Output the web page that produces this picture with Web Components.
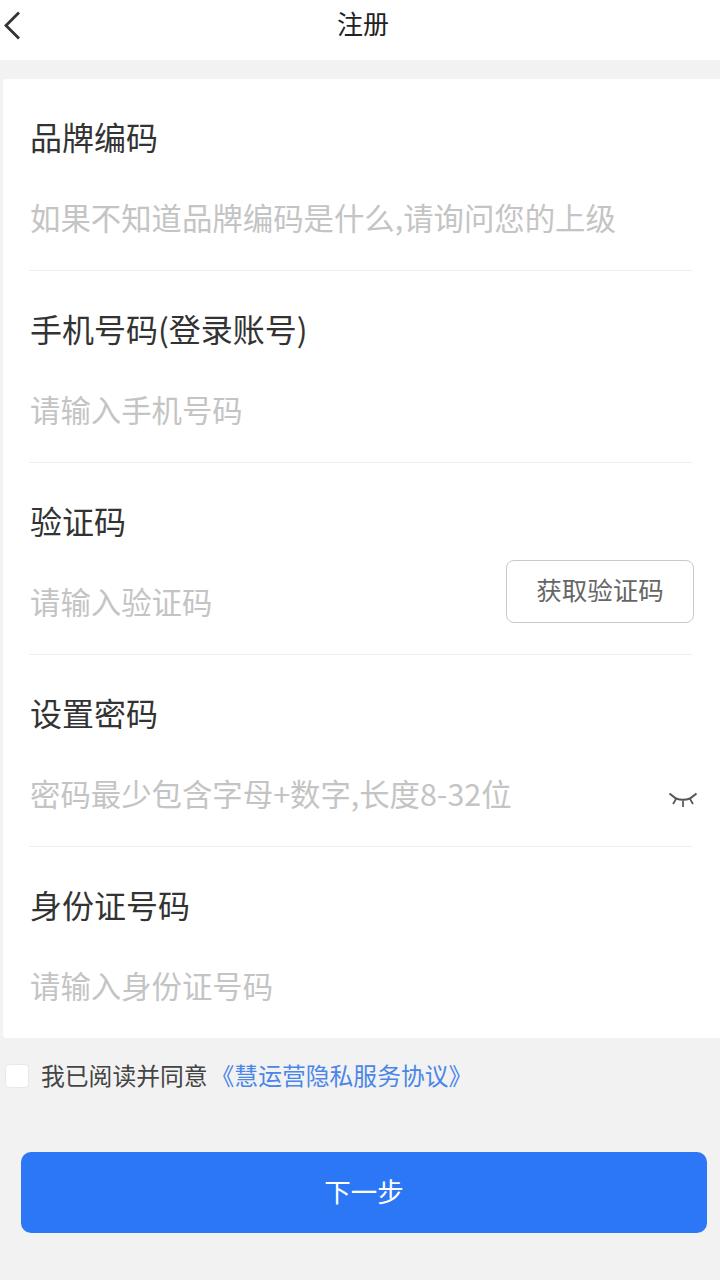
<!DOCTYPE html>
<html lang="zh">
<head>
<meta charset="utf-8">
<title>注册</title>
<style>
  html, body { margin: 0; padding: 0; }
  body {
    width: 720px;
    height: 1280px;
    overflow: hidden;
    background: #f2f2f2;
    font-family: "Noto Sans CJK SC", "Noto Sans", sans-serif;
  }
</style>
</head>
<body>
<register-page></register-page>
<script>
class NavBar extends HTMLElement {
  constructor() {
    super();
    this.attachShadow({ mode: "open" });
    this.shadowRoot.innerHTML = `
      <style>
      :host {
        display: flex;
        align-items: center;
        justify-content: center;
        position: relative;
        height: 60px;
        background: #fff;
      }
      svg { position: absolute; left: 0; top: 10px; }
      .title { font-size: 26px; line-height: 30px; color: #222; margin-left: 6px; margin-top: -14px; }
      </style>
      <svg width="26" height="32" viewBox="0 0 26 32">
        <path d="M19 2.5 L6 15.5 L19 28.5" fill="none" stroke="#333" stroke-width="2.8"/>
      </svg>
      <div class="title"><slot></slot></div>
    `;
  }
}

class FormRow extends HTMLElement {
  constructor() {
    super();
    this.attachShadow({ mode: "open" });
    this.shadowRoot.innerHTML = `
      <style>
      :host {
        display: block;
        height: 192px;
        box-sizing: border-box;
        padding: 36px 28px 0 26px;
      }
      :host(:last-child) { height: 191px; }
      .inner {
        height: 156px;
        box-sizing: border-box;
        border-bottom: 1px solid #efefef;
        position: relative;
      }
      :host(:last-child) .inner { border-bottom: 0; height: 155px; }
      .label {
        font-size: 32px;
        line-height: 42px;
        color: #333;
        margin-left: 1px;
        margin-bottom: -1px;
      }
      .line {
        display: flex;
        align-items: center;
        justify-content: space-between;
        margin-top: 40px;
        height: 42px;
        margin-left: 1px;
      }
      .placeholder {
        font-size: 30.4px;
        line-height: 42px;
        color: #c4c4c4;
        white-space: nowrap;
      }
      </style>
      <div class="inner">
        <div class="label"></div>
        <div class="line">
          <div class="placeholder"></div>
          <slot></slot>
        </div>
      </div>
    `;
  }

  connectedCallback() {
    this.shadowRoot.querySelector(".label").textContent = this.getAttribute("label");
    this.shadowRoot.querySelector(".placeholder").textContent = this.getAttribute("placeholder");
  }
}

class CodeButton extends HTMLElement {
  constructor() {
    super();
    this.attachShadow({ mode: "open" });
    this.shadowRoot.innerHTML = `
      <style>
      :host {
        position: absolute;
        right: -2px;
        top: 61px;
        width: 188px;
        height: 63px;
        box-sizing: border-box;
        display: flex;
        align-items: center;
        justify-content: center;
        border: 1.5px solid #c9c9c9;
        border-radius: 8px;
        background: #fff;
        font-size: 25.5px;
        color: #666;
        padding-bottom: 7px;
      }
      </style>
      <slot></slot>
    `;
  }
}

class EyeIcon extends HTMLElement {
  constructor() {
    super();
    this.attachShadow({ mode: "open" });
    this.shadowRoot.innerHTML = `
      <style>
      :host {
        position: absolute;
        right: -6px;
        top: 101px;
        width: 30px;
        height: 18px;
        display: block;
      }
      svg { display: block; }
      </style>
      <svg width="30" height="18" viewBox="0 0 30 18">
        <path d="M1.5 1.5 L8 6.5 Q15 9 22 6.5 L28.5 1.5" fill="none" stroke="#555" stroke-width="2"/>
        <path d="M8 7 L5 12 M15 8.5 L15 15 M22 7 L25 12" fill="none" stroke="#555" stroke-width="1.7"/>
      </svg>
    `;
  }
}

class AgreeLine extends HTMLElement {
  constructor() {
    super();
    this.attachShadow({ mode: "open" });
    this.shadowRoot.innerHTML = `
      <style>
      :host {
        display: flex;
        align-items: center;
        height: 76px;
        padding-left: 5px;
        font-size: 23.8px;
        color: #444;
      }
      .box {
        width: 22px;
        height: 22px;
        background: #fff;
        border: 1px solid #e8e8e8;
        border-radius: 4px;
        margin-right: 12px;
        flex: none;
      }
      span { margin-bottom: 4px; }
      .link { color: #4a86e8; margin-left: 3px; }
      </style>
      <div class="box"></div>
      <span>我已阅读并同意</span>
      <span class="link">《慧运营隐私服务协议》</span>
    `;
  }
}

class NextButton extends HTMLElement {
  constructor() {
    super();
    this.attachShadow({ mode: "open" });
    this.shadowRoot.innerHTML = `
      <style>
      :host {
        display: flex;
        align-items: center;
        justify-content: center;
        height: 81px;
        box-sizing: border-box;
        padding-bottom: 4px;
        margin: 38px 13px 0 21px;
        border-radius: 10px;
        background: #2b77f6;
        color: #fff;
        font-size: 26.5px;
      }
      </style>
      <slot></slot>
    `;
  }
}

class RegisterPage extends HTMLElement {
  constructor() {
    super();
    this.attachShadow({ mode: "open" });
    this.shadowRoot.innerHTML = `
      <style>
      :host { display: block; }
      .card {
        margin: 19px 0 0 3px;
        background: #fff;
        border-radius: 4px 0 0 4px;
      }
      </style>
      <nav-bar>注册</nav-bar>
      <div class="card">
        <form-row label="品牌编码" placeholder="如果不知道品牌编码是什么,请询问您的上级"></form-row>
        <form-row label="手机号码(登录账号)" placeholder="请输入手机号码"></form-row>
        <form-row label="验证码" placeholder="请输入验证码"><code-button>获取验证码</code-button></form-row>
        <form-row label="设置密码" placeholder="密码最少包含字母+数字,长度8-32位"><eye-icon></eye-icon></form-row>
        <form-row label="身份证号码" placeholder="请输入身份证号码"></form-row>
      </div>
      <agree-line></agree-line>
      <next-button>下一步</next-button>
    `;
  }
}

customElements.define("nav-bar", NavBar);
customElements.define("form-row", FormRow);
customElements.define("code-button", CodeButton);
customElements.define("eye-icon", EyeIcon);
customElements.define("agree-line", AgreeLine);
customElements.define("next-button", NextButton);
customElements.define("register-page", RegisterPage);
</script>
</body>
</html>
